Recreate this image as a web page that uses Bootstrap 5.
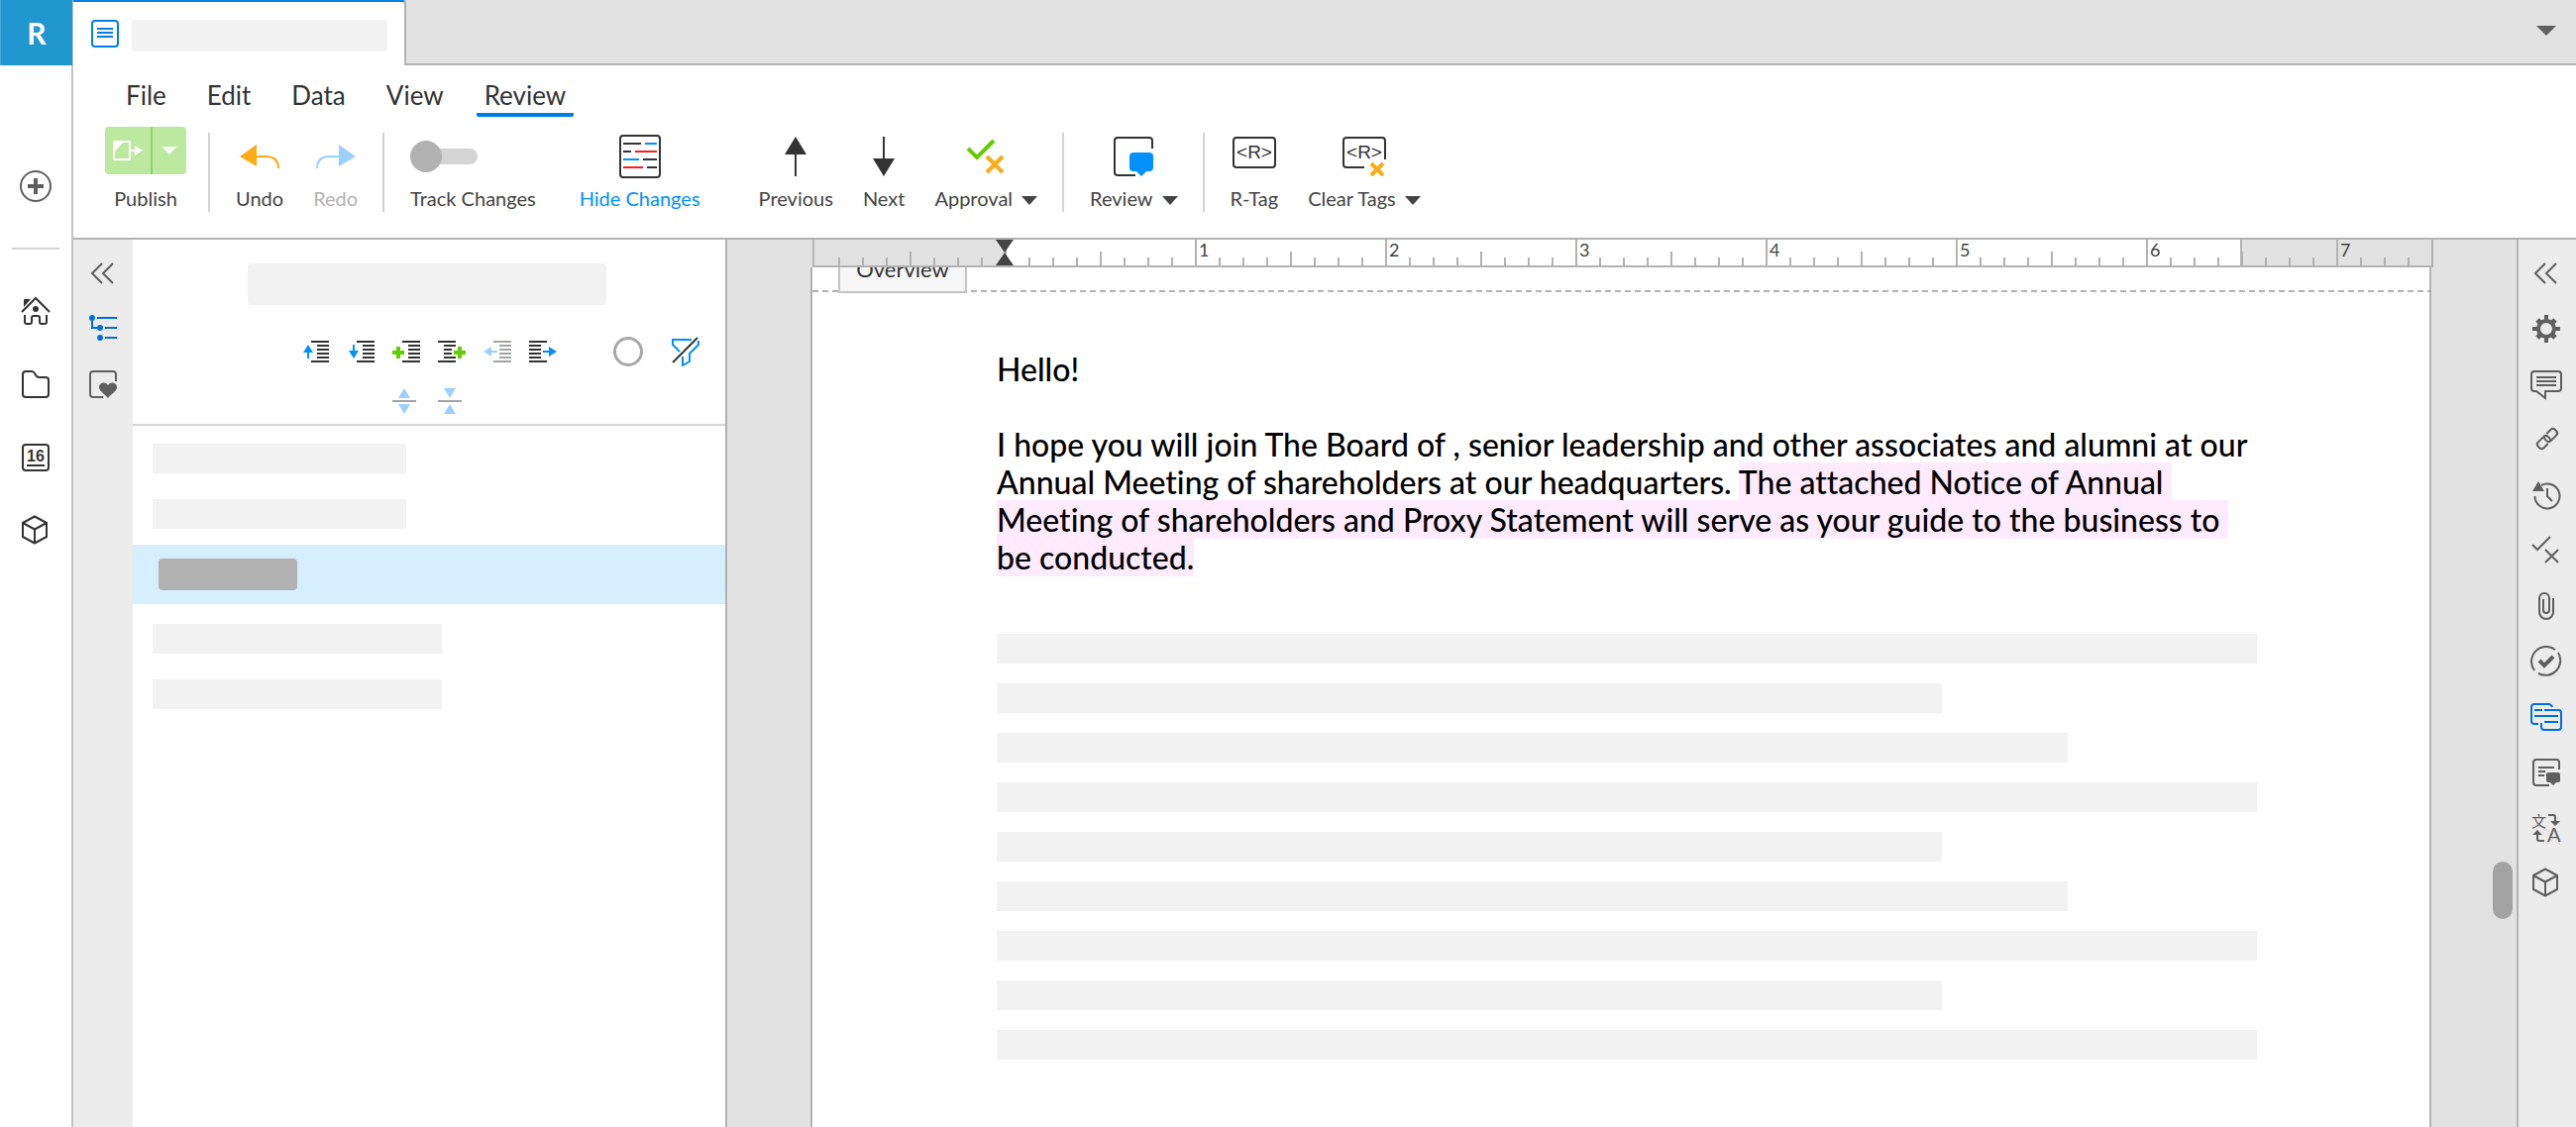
<!DOCTYPE html>
<html lang="en">
<head>
<meta charset="utf-8">
<meta name="viewport" content="width=device-width, initial-scale=1">
<title>Document editor</title>
<link rel="stylesheet" href="https://cdn.jsdelivr.net/npm/bootstrap@5.3.0/dist/css/bootstrap.min.css">
<style>
:root{--line:#b2b2b2;--blue:#0080e5;--sky:#0091ff;--ink:#333;--dim:#5f5f5f}
body{font-family:Lato,"Liberation Sans",sans-serif;font-variant-ligatures:none;color:var(--ink);background:#fff;min-height:100vh}
svg{display:block;fill:none;flex:none}
button{background:none;border:0;padding:0;color:inherit}
.app-rail{width:74px;flex:none;border-right:2px solid #c4c4c4}
.brand{width:74px;height:66px;background:#2197cf;border-left:2px solid #4fa9d8;color:#fff;font-size:30px;font-weight:700;line-height:1;text-decoration:none;margin-bottom:106px}
.rail-rule{width:48px;height:2px;background:#d4d4d4;margin:46px 0 25px}
.rail-link{width:60px;height:74px;display:flex;align-items:center;justify-content:center}
.workspace{min-width:0}
.strip{height:66px;background:#e2e2e2}
.strip-rest{border-bottom:2px solid var(--line);padding:0 20px 2px 0}
.doc-tab{width:336px;background:#fff;border-top:2px solid var(--blue);border-right:2px solid var(--line);border-radius:0 4px 0 0;padding:18px 17px 0 18px;gap:13px}
.ph{background:#f2f2f2}
.ph-tab{height:32px;border-radius:4px}
.ribbon{border-bottom:2px solid var(--line);height:176px}
.menu-row{padding:12px 0 0 45px;gap:25px}
.menu-row a{color:var(--ink);text-decoration:none;font-size:26px;line-height:36px;padding:0 8px 4px}
.menu-row a.current{background:linear-gradient(var(--blue),var(--blue)) left bottom/100% 4px no-repeat;border-radius:2px}
.tools{padding:10px 0 0 32px;gap:30px}
.tool{display:flex;flex-direction:column;align-items:center;font-size:20px;line-height:24px;color:#444;white-space:nowrap}
.tool .pic{height:60px;display:flex;align-items:center;justify-content:center}
.tool.off{color:#b2b2b2}
.tool.on{color:var(--sky)}
.tool.split{margin-right:-3px}
.tool.toggle{margin-right:14px}
.tool.on{margin-right:29px}
.vr-line{width:2px;height:80px;background:#d2d2d2;margin:6px -4px 0 -5px}
.drop{display:inline-block;border:8px solid transparent;border-top:9px solid #444;border-bottom:0;margin-left:9px;vertical-align:1px}
.publish{width:82px;height:48px;background:#bce89f;border-radius:4px;margin-bottom:12px}
.publish button{height:48px;display:flex;align-items:center;justify-content:center;flex:1}
.publish button:first-child{flex:0 0 46px}
.publish button+button{border-left:2px solid #94d369}
.switch{appearance:none;width:68px;height:32px;margin:0;position:relative}
.switch::before{content:"";position:absolute;inset:8px 0 8px 16px;background:#d4d4d4;border-radius:8px}
.switch::after{content:"";position:absolute;inset:0 36px 0 0;background:#b2b2b2;border-radius:16px}
.side-rail{width:60px;flex:none;background:#ececec;padding-top:6px}
.side-rail button{height:56px;display:flex;align-items:center;justify-content:center;color:var(--dim)}
.side-rail button.picked{color:#006fd6}
.side-rail.at-end{border-left:2px solid var(--line);padding-right:2px}
.outline{width:600px;flex:none;border-right:2px solid var(--line)}
.outline-head{border-bottom:2px solid #d5d5d5;height:188px;padding:24px 26px 0 22px}
.ph-title{width:362px;height:42px;border-radius:4px}
.icon-line{gap:18px;height:30px;margin-top:32px}
.icon-line .busy{margin-left:39px;width:30px;height:30px;border:3px solid #a8a8a8;border-radius:50%}
.icon-line .funnel{margin-left:11px}
.icon-line2{gap:22px;margin-top:22px}
.entries{padding-top:5px}
.entry{height:56px;padding:0 20px;display:flex;align-items:center}
.entry.chosen{height:60px;background:#d7eefe;padding:0 26px;margin:3px 0 7px}
.entry .short{width:256px;height:30px}
.entry .mid{width:292px;height:30px}
.chip{width:140px;height:32px;border-radius:4px;background:#b2b2b2}
.canvas{background:#e2e2e2;min-width:0;padding:0 86px 0 84px;position:relative}
.ruler{height:28px;margin:0 -2px 0 2px;border:solid var(--line);border-width:0 2px 2px;background:#fff}
.ruler svg{width:100%;height:26px}
.page{background:#fff;border:solid var(--line);border-width:0 2px}
.page-top{height:26px;overflow:hidden}
.dash{height:2px;margin-top:23px;background:repeating-linear-gradient(90deg,var(--line) 0 6px,transparent 6px 10px)}
.dash.lead-in{width:26px}
.section-tag{width:130px;height:40px;margin:-14px 4px 0 0;background:#f7f7f7;border:2px solid #c4c4c4;font-size:22px;line-height:28px;text-align:center}
.copy{padding:58px 174px 40px 186px;font-size:32px;line-height:38px;color:#000;font-weight:500}
.copy p{margin:0 0 38px}
.hl{background:#ffebff}
.bars{display:flex;flex-direction:column;gap:20px;margin-top:58px}
.bars div{height:30px}
.w-85{width:85%}
.thumb{position:absolute;right:4px;top:628px;width:20px;height:58px;border-radius:10px;background:#a3a3a3}
</style>
</head>
<body class="d-flex">

<!-- shared icon shapes -->
<svg width="0" height="0" class="position-absolute" aria-hidden="true">
<defs>
<symbol id="i-fold" viewBox="0 0 32 32"><path d="M15 6 5 16l10 10M26 6 16 16l10 10" stroke="currentColor" stroke-width="2"/></symbol>
<symbol id="i-cube" viewBox="0 0 32 32"><path d="M15 1.500 27 8v14L15 28.500 3 22V8zM3 8l12 6.500L27 8M15 14.500v14" stroke="currentColor" stroke-width="2" stroke-linejoin="round"/></symbol>
<symbol id="i-lines" viewBox="0 0 18 22"><path d="M0 1h18M6 5h12M6 9h12M6 13h12M6 17h12M0 21h18" stroke="currentColor" stroke-width="2"/></symbol>
</defs>
</svg>

<nav class="app-rail d-flex flex-column align-items-center" aria-label="Main">
  <a href="#" class="brand d-flex align-items-center justify-content-center">R</a>
  <button aria-label="Create"><svg width="32" height="32" stroke="#5f5f5f"><circle cx="16" cy="16" r="15" stroke-width="2"/><path d="M16 8v16M8 16h16" stroke-width="4"/></svg></button>
  <div class="rail-rule"></div>
  <button class="rail-link" aria-label="Home"><svg width="32" height="32" stroke="#333" stroke-width="2"><path d="M2 17 16 3l14 14"/><path d="M4 12V5q0-1 1-1h6z" fill="#333" stroke="none"/><circle cx="16" cy="14" r="3" fill="#333" stroke="none"/><path d="M5 20v7q0 2 2 2h3q2 0 2-2v-4q0-2 2-2h4q2 0 2 2v4q0 2 2 2h3q2 0 2-2v-7"/></svg></button>
  <button class="rail-link" aria-label="Files"><svg width="32" height="32"><path d="M3 6q0-3 3-3h6q2 0 3 2l2 3q1 1 3 1h6q3 0 3 3v14q0 3-3 3H6q-3 0-3-3z" stroke="#333" stroke-width="2"/></svg></button>
  <button class="rail-link" aria-label="Calendar"><svg width="32" height="32"><rect x="3" y="3" width="26" height="26" rx="3" stroke="#333" stroke-width="2"/><text x="16" y="20" text-anchor="middle" font-family="Liberation Sans,sans-serif" font-weight="700" font-size="16" fill="#333">16</text><path d="M7 24h18" stroke="#333" stroke-width="2"/></svg></button>
  <button class="rail-link" aria-label="Packages"><svg width="32" height="32"><use href="#i-cube"/></svg></button>
</nav>

<div class="workspace flex-grow-1 d-flex flex-column">
  <header>
    <div class="strip d-flex">
      <div class="doc-tab d-flex"><svg width="28" height="28" stroke="#0080e5" stroke-width="2"><rect x="1" y="1" width="26" height="26" rx="3"/><path d="M6 9h16M6 13h16M6 17h16"/></svg><div class="ph ph-tab flex-grow-1"></div></div>
      <div class="strip-rest flex-grow-1 d-flex justify-content-end align-items-center"><button aria-label="All tabs"><svg width="20" height="10"><path d="M0 0h20L10 10z" fill="#5f5f5f"/></svg></button></div>
    </div>
    <div class="ribbon">
      <nav class="menu-row d-flex" aria-label="Menu"><a href="#">File</a><a href="#">Edit</a><a href="#">Data</a><a href="#">View</a><a href="#" class="current">Review</a></nav>
      <div class="tools d-flex">
        <div class="tool split">
          <div class="publish d-flex">
            <button aria-label="Publish"><svg width="30" height="20"><path d="M1 1h16v18H1z" stroke="#fff" stroke-width="2" stroke-linejoin="round"/><path d="M1 12V1h10z" fill="#fff"/><path d="M18 10h6" stroke="#fff" stroke-width="2"/><path d="M22 5l8 5-8 5z" fill="#fff"/></svg></button>
            <button aria-label="Publish options"><svg width="16" height="8"><path d="M0 0h16L8 8z" fill="#fff" opacity=".8"/></svg></button>
          </div>
          <span>Publish</span>
        </div>
        <div class="vr-line"></div>
        <button class="tool"><span class="pic"><svg width="40" height="24"><path d="M0 12 17 0v22z" fill="#faab18"/><path d="M17 12h11q11 1 11 12" stroke="#faab18" stroke-width="2"/></svg></span>Undo</button>
        <button class="tool off"><span class="pic"><svg width="40" height="24"><path d="M40 12 23 0v22z" fill="#9dcfff"/><path d="M23 12H12Q1 13 1 24" stroke="#9dcfff" stroke-width="2"/></svg></span>Redo</button>
        <div class="vr-line"></div>
        <label class="tool toggle"><span class="pic align-self-start"><input type="checkbox" role="switch" class="switch"></span>Track Changes</label>
        <button class="tool on"><span class="pic"><svg width="42" height="44" stroke-width="2"><rect x="1" y="1" width="40" height="42" rx="3" stroke="#333"/><path d="M4 9h18M4 17h8M24 25h14M28 33h10" stroke="#333"/><path d="M26 9h12M4 25h16" stroke="#0091ff"/><path d="M16 17h22M4 33h20" stroke="#f02222"/></svg></span>Hide Changes</button>
        <button class="tool"><span class="pic"><svg width="22" height="40"><path d="M11 0 22 18H0z" fill="#333"/><path d="M11 17v23" stroke="#333" stroke-width="2"/></svg></span>Previous</button>
        <button class="tool"><span class="pic"><svg width="22" height="40"><path d="M11 40 0 22h22z" fill="#333"/><path d="M11 0v23" stroke="#333" stroke-width="2"/></svg></span>Next</button>
        <button class="tool"><span class="pic"><svg width="38" height="36"><path d="M1 10l9 9L27 2" stroke="#64cc00" stroke-width="4"/><path d="m20 18 16 16M36 18 20 34" stroke="#faab18" stroke-width="4"/></svg></span><span>Approval<i class="drop"></i></span></button>
        <div class="vr-line"></div>
        <button class="tool"><span class="pic"><svg width="40" height="40"><path d="M39 12V4q0-3-3-3H4Q1 1 1 4v32q0 3 3 3h18" stroke="#333" stroke-width="2"/><path d="M20 16h16q4 0 4 4v11q0 4-4 4h-3l-5 5-5-5h-3q-4 0-4-4V20q0-4 4-4z" fill="#0091ff"/></svg></span><span>Review<i class="drop"></i></span></button>
        <div class="vr-line"></div>
        <button class="tool"><span class="pic"><svg width="44" height="40"><rect x="1" y="1" width="42" height="30" rx="3" stroke="#333" stroke-width="2"/><text x="22" y="22" text-anchor="middle" font-family="Liberation Sans,sans-serif" font-size="19" fill="#333">&lt;R&gt;</text></svg></span>R-Tag</button>
        <button class="tool"><span class="pic"><svg width="44" height="40"><path d="M43 23V4q0-3-3-3H4Q1 1 1 4v24q0 3 3 3h18" stroke="#333" stroke-width="2"/><text x="22" y="22" text-anchor="middle" font-family="Liberation Sans,sans-serif" font-size="19" fill="#333">&lt;R&gt;</text><path d="m29 27 12 12M41 27 29 39" stroke="#faab18" stroke-width="4"/></svg></span><span>Clear Tags<i class="drop"></i></span></button>
      </div>
    </div>
  </header>

  <div class="flex-grow-1 d-flex">
    <nav class="side-rail d-flex flex-column" aria-label="Panels">
      <button aria-label="Collapse panel"><svg width="32" height="32"><use href="#i-fold"/></svg></button>
      <button class="picked" aria-label="Outline"><svg width="28" height="28"><path d="M3 3v10h8M8 3h20M16 13h12M16 23h12" stroke="currentColor" stroke-width="2"/><g fill="currentColor"><circle cx="3" cy="3" r="3"/><circle cx="11" cy="13" r="3"/><circle cx="11" cy="23" r="3"/></g></svg></button>
      <button aria-label="Favorites"><svg width="28" height="28"><path d="M27 11V4q0-3-3-3H4Q1 1 1 4v20q0 3 3 3h10" stroke="currentColor" stroke-width="2"/><path d="M19 28c-4-5-9-7-9-11 0-5 7-6 9-2 2-4 9-3 9 2 0 4-5 6-9 11z" fill="currentColor"/></svg></button>
    </nav>

    <aside class="outline">
      <div class="outline-head">
        <div class="ph ph-title mx-auto"></div>
        <div class="icon-line d-flex align-items-center justify-content-end">
          <button aria-label="Move up"><svg width="28" height="22"><path d="M7 4l5 8H2z" fill="#0091ff"/><path d="M7 10v8" stroke="#0091ff" stroke-width="2"/><use href="#i-lines" x="10" width="18" height="22"/></svg></button>
          <button aria-label="Move down"><svg width="28" height="22"><path d="M7 18l5-8H2z" fill="#0091ff"/><path d="M7 4v8" stroke="#0091ff" stroke-width="2"/><use href="#i-lines" x="10" width="18" height="22"/></svg></button>
          <button aria-label="Add before"><svg width="28" height="22"><path d="M0 12h12M6 6v12" stroke="#64cc00" stroke-width="4"/><use href="#i-lines" x="10" width="18" height="22"/></svg></button>
          <button aria-label="Add child"><svg width="28" height="22"><path d="M0 1h18M6 5h12M6 9h8M6 13h8M6 17h12M0 21h18" stroke="#333" stroke-width="2"/><path d="M16 12h12M22 6v12" stroke="#64cc00" stroke-width="4"/></svg></button>
          <button aria-label="Outdent" style="color:#a3a3a3"><svg width="28" height="22"><path d="M0 11l8-5v10z" fill="#9dcfff"/><path d="M7 11h7" stroke="#9dcfff" stroke-width="2"/><use href="#i-lines" x="10" width="18" height="22"/></svg></button>
          <button aria-label="Indent"><svg width="28" height="22"><path d="M0 1h18M0 5h12M0 9h12M0 13h12M0 17h12M0 21h18" stroke="#333" stroke-width="2"/><path d="M28 11l-8-5v10z" fill="#0091ff"/><path d="M14 11h7" stroke="#0091ff" stroke-width="2"/></svg></button>
          <button class="busy" aria-label="Status"></button>
          <button class="funnel" aria-label="Filter"><svg width="28" height="30" stroke-width="2"><path d="M20 3H1v5l7 7M27 4v4l-9 9v8l-7 4v-9" stroke="#0091ff"/><path d="M1 26 26 1" stroke="#333"/></svg></button>
        </div>
        <div class="icon-line2 d-flex justify-content-center">
          <button aria-label="Expand all"><svg width="24" height="26"><path d="M12 0l6 10H6zM12 26l6-10H6z" fill="#9dcfff"/><path d="M0 13h24" stroke="#a3a3a3" stroke-width="2"/></svg></button>
          <button aria-label="Collapse all"><svg width="24" height="26"><path d="M12 10 18 0H6zM12 16l6 10H6z" fill="#9dcfff"/><path d="M0 13h24" stroke="#a3a3a3" stroke-width="2"/></svg></button>
        </div>
      </div>
      <div class="entries">
        <div class="entry"><div class="ph short"></div></div>
        <div class="entry"><div class="ph short"></div></div>
        <div class="entry chosen"><div class="chip"></div></div>
        <div class="entry"><div class="ph mid"></div></div>
        <div class="entry"><div class="ph mid"></div></div>
      </div>
    </aside>

    <main class="canvas flex-grow-1 d-flex flex-column">
      <div class="ruler"><svg aria-hidden="true">
        <defs><pattern id="inch" x="192" width="192" height="26" patternUnits="userSpaceOnUse"><path d="M1 0v26M25 18v8M49 18v8M73 18v8M97 12v14M121 18v8M145 18v8M169 18v8" stroke="#b2b2b2" stroke-width="2"/></pattern></defs>
        <rect width="192" height="26" fill="#e2e2e2"/><rect x="1440" width="100%" height="26" fill="#e2e2e2"/>
        <path d="M1440 0v26" stroke="#b2b2b2" stroke-width="2"/>
        <rect x="20" width="100%" height="26" fill="url(#inch)"/>
        <path d="M183 0h18l-9 13zM183 26h18l-9-13z" fill="#444"/>
        <g font-size="18" fill="#444"><text x="388" y="17">1</text><text x="580" y="17">2</text><text x="772" y="17">3</text><text x="964" y="17">4</text><text x="1156" y="17">5</text><text x="1348" y="17">6</text><text x="1540" y="17">7</text></g>
      </svg></div>
      <article class="page flex-grow-1">
        <div class="page-top d-flex"><div class="dash lead-in"></div><div class="section-tag">Overview</div><div class="dash flex-grow-1"></div></div>
        <div class="copy">
          <p>Hello!</p>
          <p>I hope you will join The Board of , senior leadership and other associates and alumni at our<br>Annual Meeting of shareholders at our headquarters. <span class="hl">The attached Notice of Annual&nbsp;<br>Meeting of shareholders and Proxy Statement will serve as your guide to the business to&nbsp;<br>be conducted.</span></p>
          <div class="bars">
            <div class="ph"></div><div class="ph w-75"></div><div class="ph w-85"></div>
            <div class="ph"></div><div class="ph w-75"></div><div class="ph w-85"></div>
            <div class="ph"></div><div class="ph w-75"></div><div class="ph"></div>
          </div>
        </div>
      </article>
      <div class="thumb"></div>
    </main>

    <nav class="side-rail at-end d-flex flex-column" aria-label="Tools">
      <button aria-label="Collapse tools"><svg width="32" height="32"><use href="#i-fold"/></svg></button>
      <button aria-label="Settings"><svg width="32" height="32" stroke="currentColor"><circle cx="16" cy="16" r="8" stroke-width="4"/><path d="M16 2v6M16 24v6M2 16h6M24 16h6" stroke-width="4"/><path d="m7 7 3 3M22 22l3 3M25 7l-3 3M10 22l-3 3" stroke-width="5"/></svg></button>
      <button aria-label="Comments"><svg width="32" height="32" stroke="currentColor" stroke-width="2"><path d="M4 3h24q3 0 3 3v14q0 3-3 3H15v7l-9-7H4q-3 0-3-3V6q0-3 3-3zM6 9h20M6 13h20M6 17h20"/></svg></button>
      <button aria-label="Links"><svg width="32" height="32" stroke="currentColor" stroke-width="2"><g transform="rotate(-45 17 15)"><path d="M14 19H8q-3 0-3-3v-2q0-3 3-3h8q3 0 3 3v2q0 2-2 3"/><path d="M20 11h6q3 0 3 3v2q0 3-3 3h-8q-3 0-3-3v-2q0-2 2-3"/></g></svg></button>
      <button aria-label="History"><svg width="32" height="32"><path d="M4.500 17A12.500 12.500 0 1 0 11 6" stroke="currentColor" stroke-width="2"/><path d="M8 2 2 12h12z" fill="currentColor"/><path d="M17 9v8l5 5" stroke="currentColor" stroke-width="2"/></svg></button>
      <button aria-label="Approvals"><svg width="32" height="32"><path d="m2 10 5 5L20 2M15 15l13 13M28 15 15 28" stroke="currentColor" stroke-width="2"/></svg></button>
      <button aria-label="Attachments"><svg width="32" height="32"><path d="M23 8v14a7 7 0 0 1-14 0V8a5 5 0 0 1 10 0v12a3 3 0 0 1-6 0V9" stroke="currentColor" stroke-width="2"/></svg></button>
      <button aria-label="Tasks"><svg width="32" height="32" stroke="currentColor"><path d="M4 25A15 15 0 0 1 25 4M28 7A15 15 0 0 1 8 28" stroke-width="2"/><path d="m9 15 5 5 9-9" stroke-width="4"/></svg></button>
      <button class="picked" aria-label="Track changes panel"><svg width="32" height="32"><path d="M22 6q-1-3-4-3H4Q1 3 1 6v14q0 3 3 3h4M14 9h14q3 0 3 3v14q0 3-3 3H14q-3 0-3-3v-4M4 9h8M4 15h24M14 21h14" stroke="currentColor" stroke-width="2"/></svg></button>
      <button aria-label="Document notes"><svg width="32" height="32"><path d="M29 13V6q0-3-3-3H6Q3 3 3 6v20q0 3 3 3h13M8 11h16M8 15h7M8 19h6" stroke="currentColor" stroke-width="2"/><path d="M18 16h10q2 0 2 2v6q0 2-2 2h-2l-3 3-3-3h-2q-2 0-2-2v-6q0-2 2-2z" fill="currentColor"/></svg></button>
      <button aria-label="Translate"><svg width="32" height="32" class="overflow-visible"><g fill="currentColor"><text x="1" y="15" font-family="Noto Sans CJK SC,sans-serif" font-size="15">文</text><text x="17" y="30" font-size="20">A</text><path d="M20 9h10l-5 5zM2 23h10l-5-5z"/></g><path d="M18 3h5q2 0 2 2v4M14 29H9q-2 0-2-2v-4" stroke="currentColor" stroke-width="2"/></svg></button>
      <button aria-label="Packages panel"><svg width="32" height="32"><use href="#i-cube"/></svg></button>
    </nav>
  </div>
</div>
<script src="https://cdn.jsdelivr.net/npm/bootstrap@5.3.0/dist/js/bootstrap.bundle.min.js"></script>
</body>
</html>
